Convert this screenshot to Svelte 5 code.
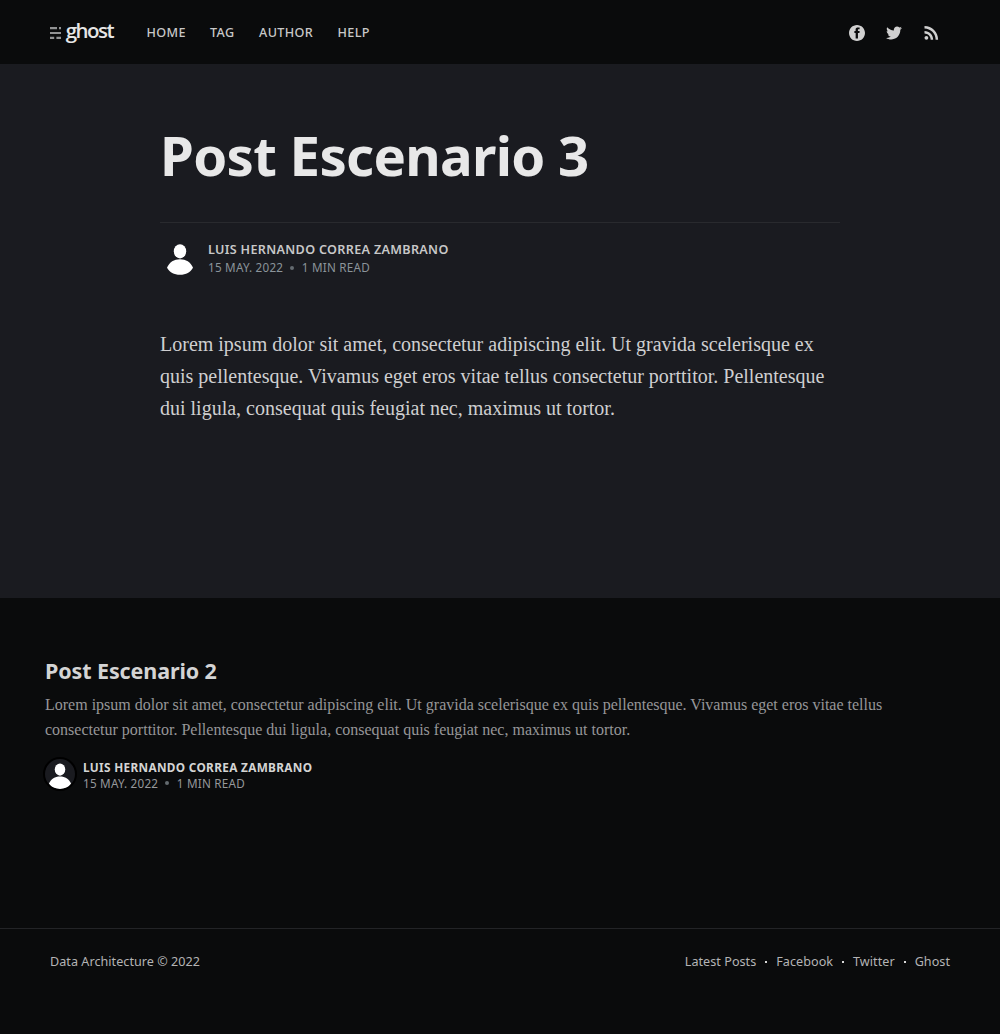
<script>
  const nav = [
    { label: 'Home', width: 39.5 },
    { label: 'Tag', width: 25 },
    { label: 'Author', width: 54.5 },
    { label: 'Help', width: 33 }
  ];
  const links = ['Latest Posts', 'Facebook', 'Twitter', 'Ghost'];
</script>

{#snippet person()}
  <svg viewBox="0 0 40 40" aria-hidden="true">
    <ellipse cx="20" cy="11.3" rx="6.2" ry="7.1" />
    <path d="M7 27.7C9.500 22 14 19.300 20 19.300S30.500 22 33 27.700C30.500 32.300 26 34.700 20 34.700S9.500 32.300 7 27.700Z" />
  </svg>
{/snippet}

<header>
  <a class="logo" href="#home" aria-label="Ghost">
    <svg width="11" height="12" viewBox="0 0 11 12" fill="#919293">
      <path d="M0 0h7v2.200H0zM9 0h2v2.200H9zM0 4.900h11v2.200H0zM0 9.800h4.200V12H0zM6.400 9.800H11V12H6.400z" />
    </svg>
    <span>ghost</span>
  </a>
  <nav>
    {#each nav as item}
      <a href="#{item.label}" style:width="{item.width}px">{item.label}</a>
    {/each}
  </nav>
  <div class="social">
    <svg width="16" height="16" viewBox="0 0 32 32"><path d="M16 0c8.837 0 16 7.163 16 16s-7.163 16-16 16S0 24.837 0 16 7.163 0 16 0zm5.204 4.911h-3.546c-2.103 0-4.443.885-4.443 3.934.01 1.062 0 2.080 0 3.225h-2.433v3.872h2.509v11.147h4.610v-11.220h3.042l.275-3.810h-3.397s.007-1.695 0-2.187c0-1.205 1.253-1.136 1.329-1.136.596 0 1.756.001 2.054 0V4.911z" /></svg>
    <svg width="18" height="18" viewBox="0 0 32 32"><path d="M30.063 7.313c-.813 1.125-1.750 2.125-2.875 2.938v.750c0 1.563-.188 3.125-.688 4.625a15.088 15.088 0 0 1-2.063 4.438c-.875 1.438-2 2.688-3.250 3.813a15.015 15.015 0 0 1-4.625 2.563c-1.813.688-3.750 1-5.750 1-3.250 0-6.188-.875-8.875-2.625.438.063.875.125 1.375.125 2.688 0 5.063-.875 7.188-2.500-1.250 0-2.375-.375-3.375-1.125s-1.688-1.688-2.063-2.875c.438.063.813.125 1.125.125.500 0 1-.063 1.500-.250-1.313-.250-2.438-.938-3.313-1.938a5.673 5.673 0 0 1-1.313-3.688v-.063c.813.438 1.688.688 2.625.688a5.228 5.228 0 0 1-1.875-2c-.500-.875-.688-1.813-.688-2.750 0-1.063.250-2.063.750-2.938 1.438 1.750 3.188 3.188 5.250 4.250s4.313 1.688 6.688 1.813a5.579 5.579 0 0 1 1.500-5.438c1.125-1.125 2.500-1.688 4.125-1.688s3.063.625 4.188 1.813a11.480 11.480 0 0 0 3.688-1.375c-.438 1.375-1.313 2.438-2.563 3.188 1.125-.125 2.188-.438 3.313-.875z" /></svg>
    <svg width="21" height="21" viewBox="0 0 24 24"><g transform="translate(0 -0.900)"><circle cx="6.180" cy="17.820" r="2.180" /><path d="M4 4.440v2.830c7.030 0 12.730 5.700 12.730 12.730h2.830c0-8.590-6.970-15.560-15.560-15.560zm0 5.660v2.830c3.900 0 7.070 3.170 7.070 7.070h2.830c0-5.470-4.430-9.900-9.900-9.900z" /></g></svg>
  </div>
</header>

<main>
  <article>
    <h1>Post Escenario 3</h1>
    <div class="byline">
      <div class="avatar">{@render person()}</div>
      <div>
        <h4>Luis Hernando Correa Zambrano</h4>
        <div class="meta"><span>15 May. 2022</span><i></i><span>1 min read</span></div>
      </div>
    </div>
    <p>Lorem ipsum dolor sit amet, consectetur adipiscing elit. Ut gravida scelerisque ex quis pellentesque. Vivamus eget eros vitae tellus consectetur porttitor. Pellentesque dui ligula, consequat quis feugiat nec, maximus ut tortor.</p>
  </article>
</main>

<section>
  <h2>Post Escenario 2</h2>
  <p>Lorem ipsum dolor sit amet, consectetur adipiscing elit. Ut gravida scelerisque ex quis pellentesque. Vivamus eget eros vitae tellus consectetur porttitor. Pellentesque dui ligula, consequat quis feugiat nec, maximus ut tortor.</p>
  <div class="byline small">
    <div class="avatar ring">{@render person()}</div>
    <div>
      <h4>Luis Hernando Correa Zambrano</h4>
      <div class="meta"><span>15 May. 2022</span><i></i><span>1 min read</span></div>
    </div>
  </div>
</section>

<footer>
  <span class="copy">Data Architecture © 2022</span>
  <div class="links">
    {#each links as link, index}
      {#if index}<i></i>{/if}
      <a href="#{link}">{link}</a>
    {/each}
  </div>
</footer>

<style>
  :global(body) {
    background: #0a0b0c;
    font-family: 'Noto Sans', 'Open Sans', sans-serif;
    color: #c8c8c8;
  }
  * { box-sizing: border-box; }
  a { color: inherit; text-decoration: none; }
  h1, h2, h4, p { margin: 0; }
  svg { display: block; flex: none; }
  header {
    height: 64px;
    display: flex;
    align-items: center;
    padding: 0 50px;
  }
  .logo { width: 72px; display: flex; align-items: center; gap: 4.700px; }
  .logo svg { margin-top: 1px; }
  .logo span {
    font: 600 20.500px/32px 'Open Sans', sans-serif;
    letter-spacing: -1.500px;
    color: #e6e6e6;
    padding-bottom: 4px;
  }
  nav { display: flex; gap: 24px; margin-left: 24.500px; padding-top: 2px; }
  nav a {
    font-size: 12.600px;
    line-height: 18px;
    font-weight: 500;
    text-transform: uppercase;
    white-space: nowrap;
    letter-spacing: 0.380px;
  }
  .social {
    margin-left: auto;
    padding-right: 8px;
    padding-top: 2px;
    display: flex;
    align-items: center;
    gap: 19px;
    fill: #d0d0d0;
  }
  .social svg:nth-child(2) { margin: 0 -1px 0 1px; }
  main {
    background: #1a1b20;
    height: 534px;
    padding: 58px 160px 0;
  }
  h1 {
    height: 100px;
    color: #e8e8e8;
    font-size: 54.500px;
    line-height: 66px;
    font-weight: 700;
    letter-spacing: -0.700px;
    white-space: nowrap;
  }
  .byline { display: flex; }
  article .byline {
    border-top: 1px solid #292a2e;
    padding-top: 17px;
    gap: 8px;
  }
  .avatar { width: 40px; height: 40px; fill: #fff; flex: none; }
  .avatar svg { width: 100%; height: 100%; }
  h4 {
    font-size: 12.600px;
    line-height: 19px;
    font-weight: 600;
    letter-spacing: 0.320px;
    text-transform: uppercase;
    white-space: nowrap;
  }
  .meta {
    display: flex;
    align-items: center;
    height: 17px;
    font-size: 11.700px;
    line-height: 17px;
    letter-spacing: 0.220px;
    text-transform: uppercase;
    color: #8b949a;
    white-space: nowrap;
  }
  .meta i {
    width: 4px;
    height: 4px;
    border-radius: 50%;
    background: #646b70;
    margin: 0 7.500px 0 7px;
  }
  article p {
    margin-top: 48px;
    font: 20px/32px 'Liberation Serif', serif;
    color: #cfcfd0;
  }
  section { height: 330px; padding: 58px 45px 0; }
  section h2 {
    font-size: 21.500px;
    line-height: 30px;
    font-weight: 700;
    letter-spacing: -0.110px;
    color: #d4d4d4;
    white-space: nowrap;
  }
  section p {
    margin-top: 6px;
    width: 860px;
    font: 16px/25px 'Liberation Serif', serif;
    color: #969698;
  }
  .small { margin: 15px 0 0 -2px; gap: 6px; }
  .small > :last-child { padding-top: 1px; }
  .ring {
    width: 34px;
    height: 34px;
    border: 2px solid #000;
    border-radius: 50%;
    background: #1a1b20;
    overflow: hidden;
  }
  .ring svg { width: 34px; height: 34px; margin: 0.500px 0 0 -2px; }
  .small h4 { font-size: 11.800px; line-height: 18px; font-weight: 700; letter-spacing: 0.320px; color: #d4d4d4; }
  .small .meta { height: 14px; line-height: 14px; color: #96989b; }
  footer {
    border-top: 1px solid #232427;
    height: 106px;
    padding: 23px 50px 0;
    display: flex;
    align-items: flex-start;
    justify-content: space-between;
    font-size: 12.600px;
    line-height: 20px;
    letter-spacing: 0.040px;
    color: #b4b4b5;
    white-space: nowrap;
  }
  .links { display: flex; align-items: center; }
  .links i { width: 2px; height: 2px; background: #d8d8d8; margin: 0 9px; }
</style>
